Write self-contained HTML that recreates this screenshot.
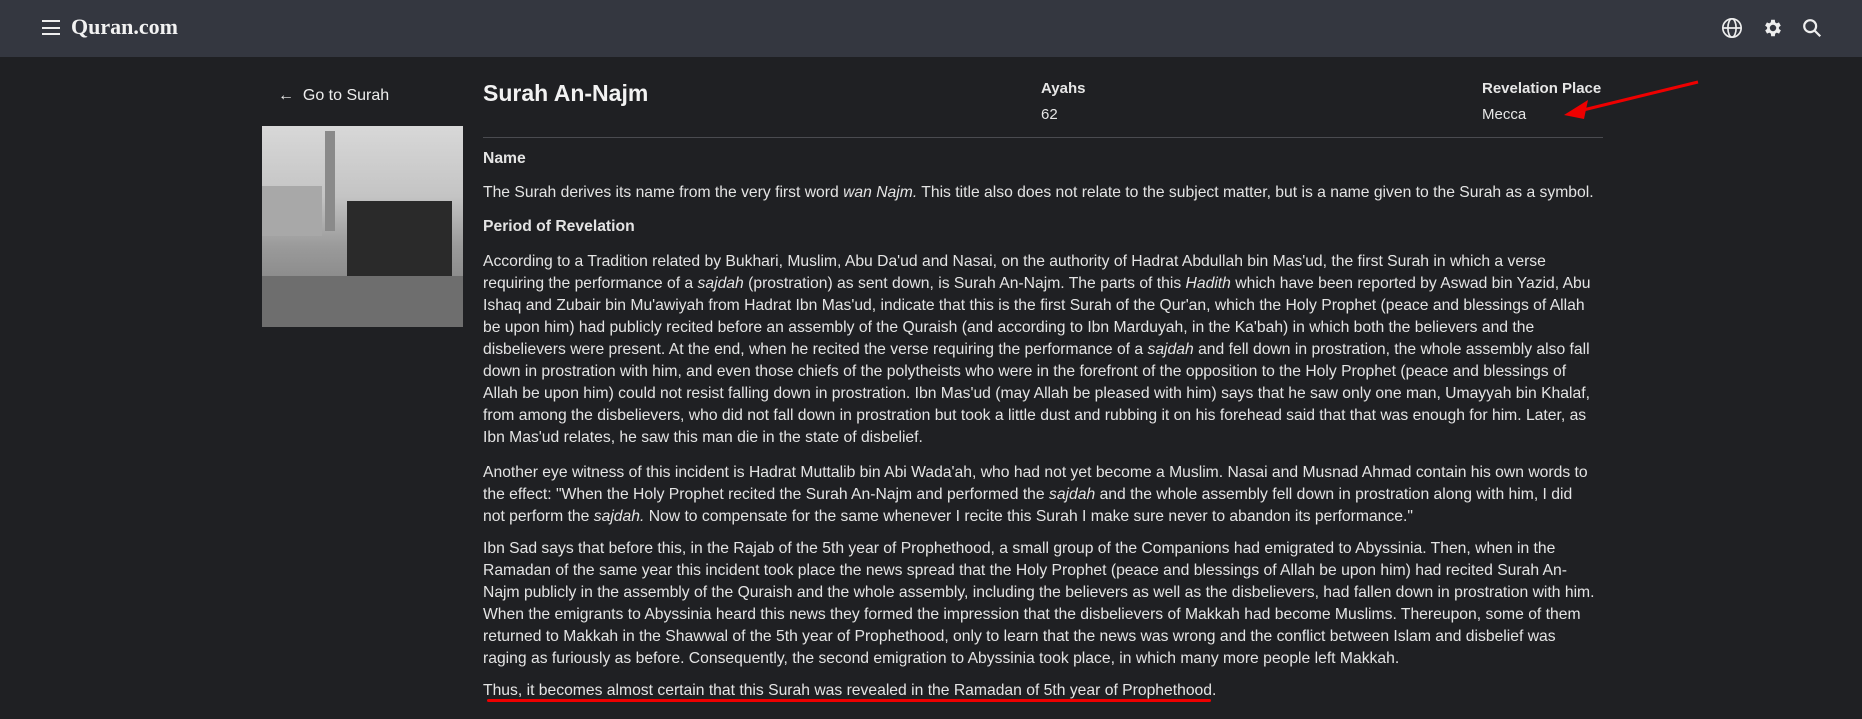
<!DOCTYPE html>
<html><head><meta charset="utf-8"><style>
*{margin:0;padding:0;box-sizing:border-box}
body{width:1862px;height:719px;overflow:hidden;background:#1f2023;font-family:"Liberation Sans",sans-serif;color:#e6e6e6;position:relative}
.hdr{position:absolute;left:0;top:0;width:1862px;height:57px;background:#343740}
.logo{position:absolute;left:71px;top:14px;font-family:"Liberation Serif",serif;font-weight:bold;font-size:22px;color:#f2f2f2}
.ham{position:absolute;left:42px;top:20px;width:18px;height:15px}
.ham i{display:block;height:2px;background:#eee;margin-bottom:4.5px}
.ic{position:absolute;top:17px}
.abs{position:absolute;white-space:nowrap}
.txt{position:absolute;left:483px;font-size:15.7px;line-height:22px;white-space:nowrap;color:#e4e4e4}
b{font-weight:bold}
</style></head><body>
<div class="hdr">
 <div class="ham"><i></i><i></i><i></i></div>
 <div class="logo">Quran.com</div>
 <svg class="ic" style="left:1721px" width="22" height="22" viewBox="0 0 24 24" fill="none" stroke="#eee" stroke-width="1.8"><circle cx="12" cy="12" r="10"/><ellipse cx="12" cy="12" rx="4.5" ry="10"/><line x1="2" y1="12" x2="22" y2="12"/></svg>
 <svg class="ic" style="left:1762px" width="22" height="22" viewBox="0 0 24 24"><path fill="#eee" d="M19.4 13a7.5 7.5 0 000-2l2.1-1.6-2-3.5-2.5 1a7.6 7.6 0 00-1.7-1L15 3h-4l-.4 2.9a7.6 7.6 0 00-1.7 1l-2.5-1-2 3.5L6.6 11a7.5 7.5 0 000 2l-2.1 1.6 2 3.5 2.5-1a7.6 7.6 0 001.7 1L11 21h4l.4-2.9a7.6 7.6 0 001.7-1l2.5 1 2-3.5zM13 15.5A3.5 3.5 0 1113 8.5a3.5 3.5 0 010 7z" transform="translate(-1 0)"/></svg>
 <svg class="ic" style="left:1801px" width="22" height="22" viewBox="0 0 24 24" fill="none" stroke="#eee" stroke-width="2.4"><circle cx="10" cy="10" r="6.5"/><line x1="15" y1="15" x2="21" y2="21"/></svg>
</div>

<div class="abs" style="left:278px;top:87px;font-size:16px;color:#eee">&larr;&nbsp;&nbsp;Go to Surah</div>
<div class="abs" style="left:262px;top:126px;width:201px;height:201px;background:linear-gradient(180deg,#d8d8d8 0%,#c4c4c4 35%,#9a9a9a 60%,#777 100%);overflow:hidden">
 <div style="position:absolute;left:63px;top:5px;width:10px;height:100px;background:#8a8a8a"></div>
 <div style="position:absolute;left:85px;top:75px;width:105px;height:80px;background:#2a2a2a"></div>
 <div style="position:absolute;left:0;top:60px;width:60px;height:50px;background:#a8a8a8"></div>
 <div style="position:absolute;left:0;top:150px;width:201px;height:51px;background:#6e6e6e"></div>
</div>

<div class="abs" style="left:483px;top:80px;font-size:23px;font-weight:bold;color:#f2f2f2">Surah An-Najm</div>
<div class="abs" style="left:1041px;top:80px;font-size:15px;font-weight:bold">Ayahs</div>
<div class="abs" style="left:1041px;top:106px;font-size:15px">62</div>
<div class="abs" style="left:1482px;top:80px;font-size:15px;font-weight:bold">Revelation Place</div>
<div class="abs" style="left:1482px;top:106px;font-size:15px">Mecca</div>
<div class="abs" style="left:483px;top:137px;width:1120px;height:1px;background:#4a4b50"></div>
<svg class="abs" style="left:1550px;top:70px" width="160" height="60"><line x1="148" y1="12" x2="25" y2="42" stroke="#e00" stroke-width="3"/><polygon points="14,45 38,30 34,49" fill="#e00"/></svg>

<div class="txt" style="top:148px"><b>Name</b></div>
<div class="txt" style="top:182px">The Surah derives its name from the very first word <i>wan Najm.</i> This title also does not relate to the subject matter, but is a name given to the Surah as a symbol.</div>
<div class="txt" style="top:216px"><b>Period of Revelation</b></div>
<div class="txt" style="top:251px">According to a Tradition related by Bukhari, Muslim, Abu Da'ud and Nasai, on the authority of Hadrat Abdullah bin Mas'ud, the first Surah in which a verse<br>
requiring the performance of a <i>sajdah</i> (prostration) as sent down, is Surah An-Najm. The parts of this <i>Hadith</i> which have been reported by Aswad bin Yazid, Abu<br>
Ishaq and Zubair bin Mu'awiyah from Hadrat Ibn Mas'ud, indicate that this is the first Surah of the Qur'an, which the Holy Prophet (peace and blessings of Allah<br>
be upon him) had publicly recited before an assembly of the Quraish (and according to Ibn Marduyah, in the Ka'bah) in which both the believers and the<br>
disbelievers were present. At the end, when he recited the verse requiring the performance of a <i>sajdah</i> and fell down in prostration, the whole assembly also fall<br>
down in prostration with him, and even those chiefs of the polytheists who were in the forefront of the opposition to the Holy Prophet (peace and blessings of<br>
Allah be upon him) could not resist falling down in prostration. Ibn Mas'ud (may Allah be pleased with him) says that he saw only one man, Umayyah bin Khalaf,<br>
from among the disbelievers, who did not fall down in prostration but took a little dust and rubbing it on his forehead said that that was enough for him. Later, as<br>
Ibn Mas'ud relates, he saw this man die in the state of disbelief.</div>
<div class="txt" style="top:462px">Another eye witness of this incident is Hadrat Muttalib bin Abi Wada'ah, who had not yet become a Muslim. Nasai and Musnad Ahmad contain his own words to<br>
the effect: "When the Holy Prophet recited the Surah An-Najm and performed the <i>sajdah</i> and the whole assembly fell down in prostration along with him, I did<br>
not perform the <i>sajdah.</i> Now to compensate for the same whenever I recite this Surah I make sure never to abandon its performance."</div>
<div class="txt" style="top:538px">Ibn Sad says that before this, in the Rajab of the 5th year of Prophethood, a small group of the Companions had emigrated to Abyssinia. Then, when in the<br>
Ramadan of the same year this incident took place the news spread that the Holy Prophet (peace and blessings of Allah be upon him) had recited Surah An-<br>
Najm publicly in the assembly of the Quraish and the whole assembly, including the believers as well as the disbelievers, had fallen down in prostration with him.<br>
When the emigrants to Abyssinia heard this news they formed the impression that the disbelievers of Makkah had become Muslims. Thereupon, some of them<br>
returned to Makkah in the Shawwal of the 5th year of Prophethood, only to learn that the news was wrong and the conflict between Islam and disbelief was<br>
raging as furiously as before. Consequently, the second emigration to Abyssinia took place, in which many more people left Makkah.</div>
<div class="txt" style="top:680px">Thus, it becomes almost certain that this Surah was revealed in the Ramadan of 5th year of Prophethood.</div>
<div class="abs" style="left:487px;top:699px;width:724px;height:3px;background:#e00;border-radius:2px"></div>
</body></html>
